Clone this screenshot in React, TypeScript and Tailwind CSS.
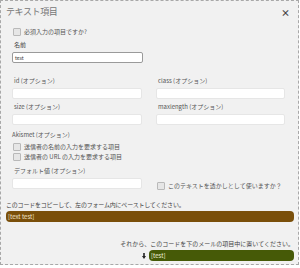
import React from "react";

function Box() {
  return (
    <span className="block w-[8px] h-[8px] shrink-0 border border-[#b9b9b9] bg-[#e6e6e6] rounded-[1px]" />
  );
}

function Field({ label }: { label: string }) {
  return (
    <div className="flex flex-col">
      <div className="text-[6px] leading-[8px] text-[#555] pl-[2px]">{label}</div>
      <div className="mt-[3px] h-[11px] bg-white border border-[#e6e6e6] rounded-[2px]" />
    </div>
  );
}

export default function App() {
  return (
    <div className="w-[299px] h-[265px] border border-dashed border-[#a8a8a8] bg-[#f1f1f1] font-['Noto_Sans_CJK_JP','DejaVu_Sans',sans-serif] overflow-hidden">
      <div className="flex justify-between items-start pl-[5px] pr-[8px] pt-[5px]">
        <div className="text-[9px] leading-[12px] tracking-[-0.4px] text-[#777]">テキスト項目</div>
        <div className="text-[9px] leading-[12px] text-[#444] font-bold mt-[1px]">×</div>
      </div>
      <div className="pl-[11px] pr-[13px]">
        <div className="mt-[9px] flex items-center gap-[3px] pl-[1px]">
          <Box />
          <span className="text-[6px] leading-[8px] text-[#555]">必須入力の項目ですか?</span>
        </div>
        <div className="mt-[5px] text-[6px] leading-[8px] text-[#444] pl-[2px]">名前</div>
        <div className="mt-[3px] h-[11px] w-[131px] bg-white border border-[#9a9a9a] rounded-[2px] flex items-center pl-[2px]">
          <span className="text-[5px] leading-[6px] text-[#333]">test</span>
        </div>
        <div className="mt-[14px] grid grid-cols-[130px_129px] gap-x-[14px]">
          <Field label="id  (オプション)" />
          <Field label="class (オプション)" />
        </div>
        <div className="mt-[4px] grid grid-cols-[130px_129px] gap-x-[14px]">
          <Field label="size (オプション)" />
          <Field label="maxlength (オプション)" />
        </div>
        <div className="mt-[6px] text-[6px] leading-[8px] text-[#555]">Akismet (オプション)</div>
        <div className="mt-[4px] flex items-center gap-[3px] pl-[1px]">
          <Box />
          <span className="text-[6px] leading-[8px] text-[#555]">送信者の名前の入力を要求する項目</span>
        </div>
        <div className="mt-[2px] flex items-center gap-[3px] pl-[1px]">
          <Box />
          <span className="text-[6px] leading-[8px] text-[#555]">送信者の URL の入力を要求する項目</span>
        </div>
        <div className="mt-[6px] grid grid-cols-[130px_129px] gap-x-[14px]">
          <Field label="デフォルト値 (オプション)" />
          <div className="self-end flex items-center gap-[3px] pl-[1px] mb-[-1px]">
            <Box />
            <span className="text-[6px] leading-[8px] text-[#555] whitespace-nowrap">このテキストを透かしとして使いますか？</span>
          </div>
        </div>
      </div>
      <div className="pl-[5px] pr-[4px]">
        <div className="mt-[12px] text-[6px] leading-[8px] tracking-[-0.2px] text-[#444]">
          このコードをコピーして、左のフォーム内にペーストしてください。
        </div>
        <div className="mt-[2px] h-[11px] rounded-[4px] bg-[#7a4f0a] flex items-center pl-[2px]">
          <span className="text-[6px] leading-[8px] text-[#f3e6cc]">[text test]</span>
        </div>
        <div className="mt-[18px] text-[6px] leading-[8px] text-[#444] text-right">
          それから、このコードを下のメールの項目中に置いてください。
        </div>
        <div className="mt-[2px] flex justify-end items-center gap-[3px]">
          <svg width="4" height="6" viewBox="0 0 4 6" className="block">
            <path d="M1.2 0h1.6v3H4L2 6 0 3h1.2z" fill="#222" />
          </svg>
          <div className="w-[145px] h-[11px] rounded-[4px] bg-[#465a07] flex items-center pl-[2px]">
            <span className="text-[6px] leading-[8px] text-[#eef2dc]">[test]</span>
          </div>
        </div>
      </div>
    </div>
  );
}
